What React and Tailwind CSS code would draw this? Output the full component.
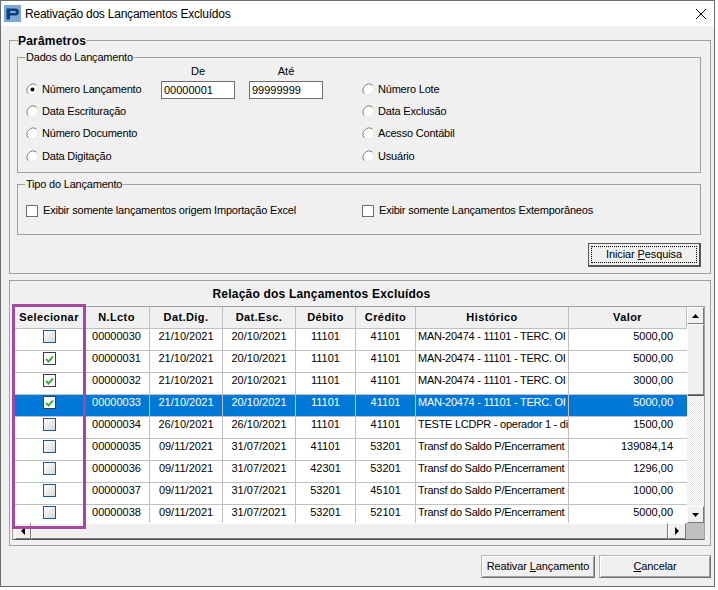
import React from "react";

const colWidths = ["w-[69px]", "w-[66px]", "w-[73px]", "w-[73px]", "w-[60px]", "w-[60px]", "w-[153px]", "w-[118px]"];
const headers = ["Selecionar", "N.Lcto", "Dat.Dig.", "Dat.Esc.", "Débito", "Crédito", "Histórico", "Valor"];

const rows = [
  { id: "00000030", dig: "21/10/2021", esc: "20/10/2021", deb: "11101", cred: "41101", hist: "MAN-20474 - 11101 - TERC. OI", val: "5000,00" },
  { id: "00000031", dig: "21/10/2021", esc: "20/10/2021", deb: "11101", cred: "41101", hist: "MAN-20474 - 11101 - TERC. OI", val: "5000,00", checked: true },
  { id: "00000032", dig: "21/10/2021", esc: "20/10/2021", deb: "11101", cred: "41101", hist: "MAN-20474 - 11101 - TERC. OI", val: "3000,00", checked: true },
  { id: "00000033", dig: "21/10/2021", esc: "20/10/2021", deb: "11101", cred: "41101", hist: "MAN-20474 - 11101 - TERC. OI", val: "5000,00", checked: true, selected: true },
  { id: "00000034", dig: "26/10/2021", esc: "26/10/2021", deb: "11101", cred: "41101", hist: "TESTE LCDPR - operador 1 - dia", val: "1500,00" },
  { id: "00000035", dig: "09/11/2021", esc: "31/07/2021", deb: "41101", cred: "53201", hist: "Transf do Saldo P/Encerrament", val: "139084,14" },
  { id: "00000036", dig: "09/11/2021", esc: "31/07/2021", deb: "42301", cred: "53201", hist: "Transf do Saldo P/Encerrament", val: "1296,00" },
  { id: "00000037", dig: "09/11/2021", esc: "31/07/2021", deb: "53201", cred: "45101", hist: "Transf do Saldo P/Encerrament", val: "1000,00" },
  { id: "00000038", dig: "09/11/2021", esc: "31/07/2021", deb: "53201", cred: "52101", hist: "Transf do Saldo P/Encerrament", val: "5000,00" },
];

const Radio = ({ label, checked }) => (
  <div className="flex items-center h-[22.3px]">
    <svg width="13" height="13" viewBox="0 0 13 13" className="mr-[3px] shrink-0">
      <circle cx="6.5" cy="6.5" r="6" fill="#fff" />
      <path d="M2.3 10.7A6 6 0 0 1 10.7 2.3" fill="none" stroke="#777" />
      <path d="M2.3 10.7A6 6 0 0 0 10.7 2.3" fill="none" stroke="#ddd" />
      {checked && <circle cx="6.5" cy="6.5" r="2" fill="#000" />}
    </svg>
    <span>{label}</span>
  </div>
);

const Check = ({ checked }) => (
  <div className={`w-[13px] h-[13px] border flex items-center justify-center ${checked ? "border-[#3a3a5a] bg-white" : "border-[#1b5a8c] bg-gradient-to-br from-white to-[#d8d8d8]"}`}>
    {checked && (
      <svg width="9" height="8" viewBox="0 0 9 8">
        <path d="M1 4l2.5 2.5L8 1.5" fill="none" stroke="#3fae49" strokeWidth="2" />
      </svg>
    )}
  </div>
);

const Arrow = ({ dir }) => {
  const points = { up: "0,4 7,4 3.5,0", down: "0,0 7,0 3.5,4", left: "4,0 4,8 0,4", right: "0,0 0,8 4,4" };
  const vertical = dir === "up" || dir === "down";
  return (
    <svg width={vertical ? 7 : 4} height={vertical ? 4 : 8}>
      <polygon points={points[dir]} fill="#000" />
    </svg>
  );
};

const raised = "border border-t-white border-l-white border-r-[#7a7a7a] border-b-[#7a7a7a] bg-[#f0f0f0] flex items-center justify-center shadow-[1px_1px_0_#505050]";
const dialogButton = "h-[23px] border border-[#b4b4b4] border-r-[#707070] border-b-[#707070] bg-[#f0f0f0] flex items-center justify-center tracking-[-0.1px] shadow-[inset_1px_1px_0_#ffffff,inset_-1px_-1px_0_#a0a0a0]";

export default function App() {
  return (
    <div className="w-[718px] h-[590px] bg-white text-[11px] leading-none text-black font-['Liberation_Sans',sans-serif]">
      <div className="w-[715px] h-[587px] border border-[#6e6e6e] bg-[#f0f0f0] flex flex-col">
        {/* Title bar */}
        <div className="h-[25px] shrink-0 bg-white flex items-center pl-[3px] pr-[7px]">
          <svg width="17" height="17" viewBox="0 0 17 17" className="mr-[4px]">
            <rect width="17" height="17" fill="#7ba8d4" />
            <path d="M2.5 3.5h9a3 3 0 0 1 0 7H6v4H2.5z M6 6v2h5a1 1 0 0 0 0-2z" fill="#0f3f78" fillRule="evenodd" />
          </svg>
          <span className="text-[12px] flex-1 tracking-[-0.22px]">Reativação dos Lançamentos Excluídos</span>
          <svg width="12" height="12" viewBox="0 0 12 12">
            <path d="M1 1l10 10M11 1L1 11" stroke="#000" fill="none" />
          </svg>
        </div>

        <div className="flex-1 pl-[8px] pr-[3px] pt-[14px]">
          {/* Parâmetros */}
          <div className="relative h-[234px] border border-[#a0a0a0] pl-[7px] pr-[9px] pt-[16px] tracking-[-0.2px]">
            <span className="absolute -top-[6px] left-[8px] bg-[#f0f0f0] font-bold text-[12px] tracking-[0.2px]">Parâmetros</span>

            <div className="relative h-[116px] border border-[#a0a0a0] flex pl-[8px]">
              <span className="absolute -top-[6px] left-[7px] bg-[#f0f0f0] px-px">Dados do Lançamento</span>
              <div className="w-[135px] pt-[20px]">
                <Radio label="Número Lançamento" checked />
                <Radio label="Data Escrituração" />
                <Radio label="Número Documento" />
                <Radio label="Data Digitação" />
              </div>
              <div className="w-[74px] mr-[14px] pt-[8px] tracking-normal">
                <div className="text-center h-[15px]">De</div>
                <div className="h-[18px] border border-[#6e6e6e] bg-white flex items-center px-[2px]">00000001</div>
              </div>
              <div className="w-[74px] mr-[39px] pt-[8px] tracking-normal">
                <div className="text-center h-[15px]">Até</div>
                <div className="h-[18px] border border-[#6e6e6e] bg-white flex items-center px-[2px]">99999999</div>
              </div>
              <div className="pt-[20px]">
                <Radio label="Número Lote" />
                <Radio label="Data Exclusão" />
                <Radio label="Acesso Contábil" />
                <Radio label="Usuário" />
              </div>
            </div>

            <div className="relative mt-[11px] h-[51px] border border-[#a0a0a0] flex items-center pl-[8px] pt-[2px]">
              <span className="absolute -top-[6px] left-[7px] bg-[#f0f0f0] px-px">Tipo do Lançamento</span>
              <div className="w-[336px] flex items-center">
                <div className="w-[12px] h-[12px] border border-[#707070] bg-white mr-[5px]" />
                Exibir somente lançamentos origem Importação Excel
              </div>
              <div className="flex items-center">
                <div className="w-[12px] h-[12px] border border-[#707070] bg-white mr-[5px]" />
                Exibir somente Lançamentos Extemporâneos
              </div>
            </div>

            <div className="flex justify-end mt-[8px]">
              <button className="w-[113px] h-[24px] border border-[#555] border-b-2 border-r-2 bg-[#f0f0f0] p-[2px] tracking-[-0.1px]">
                <span className="h-full flex items-center justify-center border border-dotted border-black">
                  Iniciar&nbsp;<u>P</u>esquisa
                </span>
              </button>
            </div>
          </div>

          {/* Relação */}
          <div className="relative mt-[6px] h-[266px] border border-[#a0a0a0] pl-[2px] pr-[5px] pt-[7px]">
            <div className="text-center font-bold text-[12px] h-[18px] pr-[74px] tracking-[0.2px]">Relação dos Lançamentos Excluídos</div>

            <div className="h-[234px] border border-[#a0a0a0] border-b-[#606060] pl-[2px] flex flex-col">
              <div className="flex-1 flex overflow-hidden">
                <div className="w-[672px] shrink-0 overflow-hidden">
                  <div className="flex h-[22px] bg-[#f0f0f0] border-b border-[#c0c0c0]">
                    {headers.map((h, i) => (
                      <div key={h} className={`${colWidths[i]} shrink-0 border-r border-[#c0c0c0] flex items-center justify-center font-bold tracking-[0.4px]`}>{h}</div>
                    ))}
                  </div>
                  {rows.map((r) => (
                    <div key={r.id} className={`flex h-[22px] border-b border-[#c0c0c0] ${r.selected ? "bg-[#0078d7] text-white" : "bg-white"}`}>
                      <div className={`${colWidths[0]} shrink-0 border-r border-[#c0c0c0] flex justify-center pt-[1px]`}>
                        <Check checked={r.checked} />
                      </div>
                      <div className={`${colWidths[1]} shrink-0 border-r border-[#c0c0c0] text-center pt-[2px]`}>{r.id}</div>
                      <div className={`${colWidths[2]} shrink-0 border-r border-[#c0c0c0] text-center pt-[2px]`}>{r.dig}</div>
                      <div className={`${colWidths[3]} shrink-0 border-r border-[#c0c0c0] text-center pt-[2px]`}>{r.esc}</div>
                      <div className={`${colWidths[4]} shrink-0 border-r border-[#c0c0c0] text-center pt-[2px]`}>{r.deb}</div>
                      <div className={`${colWidths[5]} shrink-0 border-r border-[#c0c0c0] text-center pt-[2px]`}>{r.cred}</div>
                      <div className={`${colWidths[6]} shrink-0 border-r border-[#c0c0c0] pl-[2px] pt-[2px] whitespace-nowrap overflow-hidden tracking-[-0.25px]`}>{r.hist}</div>
                      <div className={`${colWidths[7]} shrink-0 text-right pr-[14px] pt-[2px]`}>{r.val}</div>
                    </div>
                  ))}
                </div>

                {/* Vertical scrollbar */}
                <div className="w-[17px] flex flex-col bg-[repeating-conic-gradient(#ffffff_0_25%,#e4e4e4_0_50%)] bg-[length:2px_2px]">
                  <div className={`h-[17px] shrink-0 ${raised}`}><Arrow dir="up" /></div>
                  <div className={`h-[71px] shrink-0 ${raised}`} />
                  <div className="flex-1" />
                  <div className={`h-[17px] shrink-0 ${raised}`}><Arrow dir="down" /></div>
                </div>
              </div>

              {/* Horizontal scrollbar */}
              <div className="h-[16px] shrink-0 flex">
                <div className={`w-[16px] ${raised}`}><Arrow dir="left" /></div>
                <div className={`w-[637px] ${raised}`} />
                <div className={`w-[18px] ${raised}`}><Arrow dir="right" /></div>
                <div className="w-[18px] bg-[#c0c0c0]" />
              </div>
            </div>
          </div>

          {/* Bottom buttons */}
          <div className="flex justify-end gap-[4px] mt-[9px]">
            <button className={`w-[114px] ${dialogButton}`}>Reativar&nbsp;<u>L</u>ançamento</button>
            <button className={`w-[112px] ${dialogButton}`}><u>C</u>ancelar</button>
          </div>
        </div>
      </div>

      {/* Purple highlight around the Selecionar column */}
      <div className="absolute left-[12px] top-[304px] w-[74px] h-[225px] border-[3px] border-[#a349a4] pointer-events-none" />
    </div>
  );
}
